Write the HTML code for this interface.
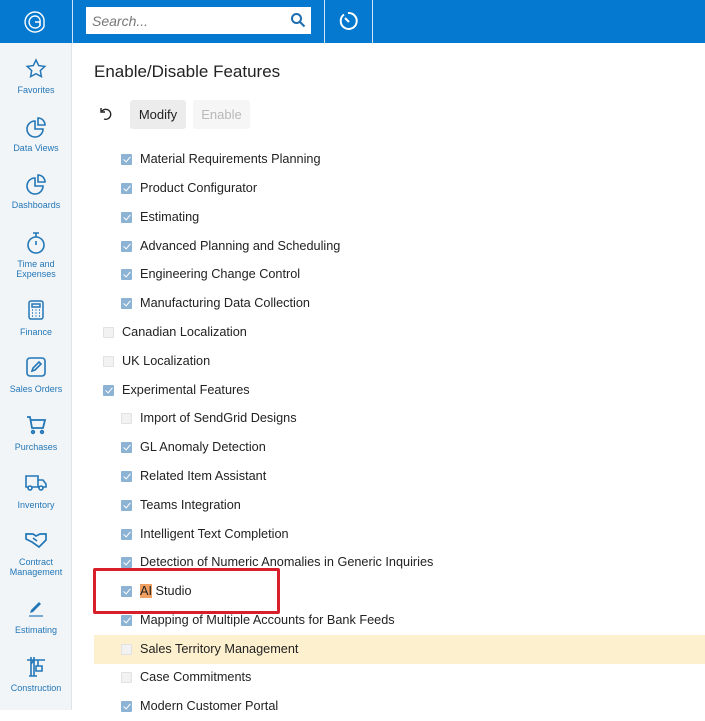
<!DOCTYPE html>
<html><head><style>
*{margin:0;padding:0;box-sizing:border-box}
body{width:705px;height:710px;overflow:hidden;font-family:"Liberation Sans",Arial,sans-serif;background:#fff;position:relative}
.top{position:absolute;left:0;top:0;width:705px;height:43px;background:#0479cf}
.vl{position:absolute;top:0;width:1px;height:43px;background:#cfe4f5}
.search{position:absolute;left:86px;top:7px;width:225px;height:27px;background:#fff}
.search span{position:absolute;left:6px;top:6px;font-size:14px;font-style:italic;color:#777}
.side{position:absolute;left:0;top:43px;width:72px;height:667px;background:#f2f5f8;border-right:1px solid #dfe4ea}
.it{position:absolute;left:0;width:72px;text-align:center;font-size:9px;line-height:10px;color:#2377b7}
.it svg{position:absolute;left:25px}
.it div{margin-top:3px}
h1{position:absolute;left:94px;top:62px;font-size:17px;font-weight:normal;color:#222}
.btn{position:absolute;top:100px;height:29px;font-size:13px;line-height:29px;text-align:center;border-radius:3px}
.row{position:absolute;left:0;width:705px;height:29px;font-size:12.7px;color:#222;line-height:29px}
.cb{position:absolute;top:9px;width:11px;height:11px;border-radius:1px}
.on{background:#8cb2d4}
.off{background:#f2f2f2;border:1px solid #e2e2e2}
.on:after{content:"";position:absolute;left:3.5px;top:1px;width:3px;height:6px;border:solid #fff;border-width:0 1.6px 1.6px 0;transform:rotate(40deg)}
</style></head><body>
<div class="top">
<svg style="position:absolute;left:23px;top:10px" width="24" height="24" viewBox="0 0 24 24" fill="none" stroke="#fff" stroke-width="1.4"><path d="M12 2a10 10 0 1 0 9 14.5V12A9 9 0 0 0 12 2z"/><path d="M12 6a6 6 0 1 0 5 9.5V12a5 5 0 0 0-5-6z"/><path d="M12 12h5v4"/></svg>
<div class="vl" style="left:72px"></div>
<div class="search"><span>Search...</span>
<svg style="position:absolute;left:204px;top:5px" width="16" height="16" viewBox="0 0 16 16" fill="none" stroke="#1c6cb0" stroke-width="2"><circle cx="6.5" cy="6.5" r="4.5"/><path d="M10 10l4.5 4.5"/></svg></div>
<div class="vl" style="left:324px"></div>
<svg style="position:absolute;left:337px;top:10px" width="22" height="22" viewBox="0 0 22 22" fill="none" stroke="#fff" stroke-width="2"><path d="M7 4.5A8 8 0 1 0 11 3"/><path d="M8 8l4 4"/></svg>
<div class="vl" style="left:372px"></div>
</div>
<div class="side">
<div class="it" style="top:17px"><svg width="22" height="22" viewBox="0 0 22 22" fill="none" stroke="#2377b7" stroke-width="1.5" style="top:-2px"><path d="M11 2l2.7 5.6 6.1.8-4.5 4.2 1.1 6L11 15.7l-5.4 2.9 1.1-6-4.5-4.2 6.1-.8z"/></svg><div style="position:absolute;top:22px;width:72px">Favorites</div></div>
<div class="it" style="top:75px"><svg width="22" height="22" viewBox="0 0 22 22" fill="none" stroke="#2377b7" stroke-width="1.6" style="top:-2px"><path d="M10 5a8 8 0 1 0 8 8h-8z"/><path d="M13 2a7 7 0 0 1 7 7h-7z"/></svg><div style="position:absolute;top:22px;width:72px">Data Views</div></div>
<div class="it" style="top:132px"><svg width="22" height="22" viewBox="0 0 22 22" fill="none" stroke="#2377b7" stroke-width="1.6" style="top:-2px"><path d="M10 5a8 8 0 1 0 8 8h-8z"/><path d="M13 2a7 7 0 0 1 7 7h-7z"/></svg><div style="position:absolute;top:22px;width:72px">Dashboards</div></div>
<div class="it" style="top:190px"><svg width="22" height="24" viewBox="0 0 22 24" fill="none" stroke="#2377b7" stroke-width="1.6" style="top:-2px"><circle cx="11" cy="14" r="8"/><path d="M8 2h6M11 2v4M11 10v4"/></svg><div style="position:absolute;top:23px;width:72px">Time and<br>Expenses</div></div>
<div class="it" style="top:258px"><svg width="22" height="22" viewBox="0 0 22 22" fill="none" stroke="#2377b7" stroke-width="1.5" style="top:-2px"><rect x="4" y="2" width="14" height="18" rx="2"/><path d="M7 5h8v3H7z"/><path d="M7 11h1M10.5 11h1M14 11h1M7 14h1M10.5 14h1M14 14h1M7 17h1M10.5 17h1M14 17h1"/></svg><div style="position:absolute;top:23px;width:72px">Finance</div></div>
<div class="it" style="top:315px"><svg width="22" height="22" viewBox="0 0 22 22" fill="none" stroke="#2377b7" stroke-width="1.6" style="top:-2px"><rect x="2" y="2" width="18" height="18" rx="3"/><path d="M7 15l1-3 6-6 2 2-6 6z"/></svg><div style="position:absolute;top:23px;width:72px">Sales Orders</div></div>
<div class="it" style="top:373px"><svg width="22" height="22" viewBox="0 0 22 22" fill="none" stroke="#2377b7" stroke-width="1.8" style="top:-2px"><path d="M2 3h3l2 11h11l2-8H6"/><circle cx="8" cy="18" r="1.3"/><circle cx="17" cy="18" r="1.3"/></svg><div style="position:absolute;top:23px;width:72px">Purchases</div></div>
<div class="it" style="top:431px"><svg width="24" height="22" viewBox="0 0 24 22" fill="none" stroke="#2377b7" stroke-width="1.6" style="top:-2px;left:24px"><path d="M2 4h12v11H2zM14 8h5l3 4v3h-8"/><circle cx="6" cy="16" r="2" fill="#f2f5f8"/><circle cx="17" cy="16" r="2" fill="#f2f5f8"/></svg><div style="position:absolute;top:23px;width:72px">Inventory</div></div>
<div class="it" style="top:488px"><svg width="24" height="22" viewBox="0 0 24 22" fill="none" stroke="#2377b7" stroke-width="1.7" style="top:-2px;left:24px"><path d="M2 5h7l3 2 4-2h6v6l-7 7-7-5-6-3z"/><path d="M9 9l4 3"/></svg><div style="position:absolute;top:23px;width:72px">Contract<br>Management</div></div>
<div class="it" style="top:557px"><svg width="22" height="22" viewBox="0 0 22 22" style="top:-2px"><path d="M5 15l1-3 8-8 2 2-8 8z" fill="#2377b7"/><path d="M4 18h14" stroke="#2377b7" stroke-width="1.2"/></svg><div style="position:absolute;top:22px;width:72px">Estimating</div></div>
<div class="it" style="top:613px"><svg width="22" height="24" viewBox="0 0 22 24" fill="none" stroke="#2377b7" stroke-width="1.6" style="top:-2px"><path d="M2 6h18M6 3v19M9 3v19M6 10l3-4M13 6v6M11 12h6v5h-6zM4 22h8"/></svg><div style="position:absolute;top:24px;width:72px">Construction</div></div>
</div>
<h1>Enable/Disable Features</h1>
<svg style="position:absolute;left:99px;top:107px" width="16" height="14" viewBox="0 0 16 14" fill="none" stroke="#222" stroke-width="1.4"><path d="M3 4a5 5 0 1 1 2 8"/><path d="M2 1v4h4"/></svg>
<div class="btn" style="left:130px;width:56px;background:#ececec;color:#222">Modify</div>
<div class="btn" style="left:193px;width:57px;background:#f6f6f6;color:#b8b8b8">Enable</div>
<div class="row" style="top:145px"><i class="cb on" style="left:121px"></i><span style="position:absolute;left:140px">Material Requirements Planning</span></div>
<div class="row" style="top:174px"><i class="cb on" style="left:121px"></i><span style="position:absolute;left:140px">Product Configurator</span></div>
<div class="row" style="top:203px"><i class="cb on" style="left:121px"></i><span style="position:absolute;left:140px">Estimating</span></div>
<div class="row" style="top:232px"><i class="cb on" style="left:121px"></i><span style="position:absolute;left:140px">Advanced Planning and Scheduling</span></div>
<div class="row" style="top:260px"><i class="cb on" style="left:121px"></i><span style="position:absolute;left:140px">Engineering Change Control</span></div>
<div class="row" style="top:289px"><i class="cb on" style="left:121px"></i><span style="position:absolute;left:140px">Manufacturing Data Collection</span></div>
<div class="row" style="top:318px"><i class="cb off" style="left:103px"></i><span style="position:absolute;left:122px">Canadian Localization</span></div>
<div class="row" style="top:347px"><i class="cb off" style="left:103px"></i><span style="position:absolute;left:122px">UK Localization</span></div>
<div class="row" style="top:376px"><i class="cb on" style="left:103px"></i><span style="position:absolute;left:122px">Experimental Features</span></div>
<div class="row" style="top:404px"><i class="cb off" style="left:121px"></i><span style="position:absolute;left:140px">Import of SendGrid Designs</span></div>
<div class="row" style="top:433px"><i class="cb on" style="left:121px"></i><span style="position:absolute;left:140px">GL Anomaly Detection</span></div>
<div class="row" style="top:462px"><i class="cb on" style="left:121px"></i><span style="position:absolute;left:140px">Related Item Assistant</span></div>
<div class="row" style="top:491px"><i class="cb on" style="left:121px"></i><span style="position:absolute;left:140px">Teams Integration</span></div>
<div class="row" style="top:520px"><i class="cb on" style="left:121px"></i><span style="position:absolute;left:140px">Intelligent Text Completion</span></div>
<div class="row" style="top:548px"><i class="cb on" style="left:121px"></i><span style="position:absolute;left:140px">Detection of Numeric Anomalies in Generic Inquiries</span></div>
<div class="row" style="top:577px"><i class="cb on" style="left:121px"></i><span style="position:absolute;left:140px"><span style="background:#f0a060">AI</span> Studio</span></div>
<div class="row" style="top:606px"><i class="cb on" style="left:121px"></i><span style="position:absolute;left:140px">Mapping of Multiple Accounts for Bank Feeds</span></div>
<div class="row" style="top:635px;left:94px;width:611px;background:#fdf0cf"><i class="cb off" style="left:27px"></i><span style="position:absolute;left:46px">Sales Territory Management</span></div>
<div class="row" style="top:663px"><i class="cb off" style="left:121px"></i><span style="position:absolute;left:140px">Case Commitments</span></div>
<div class="row" style="top:692px"><i class="cb on" style="left:121px"></i><span style="position:absolute;left:140px">Modern Customer Portal</span></div>
<div style="position:absolute;left:93px;top:568px;width:187px;height:46px;border:3px solid #d7202b;border-radius:2px"></div>
</body></html>
